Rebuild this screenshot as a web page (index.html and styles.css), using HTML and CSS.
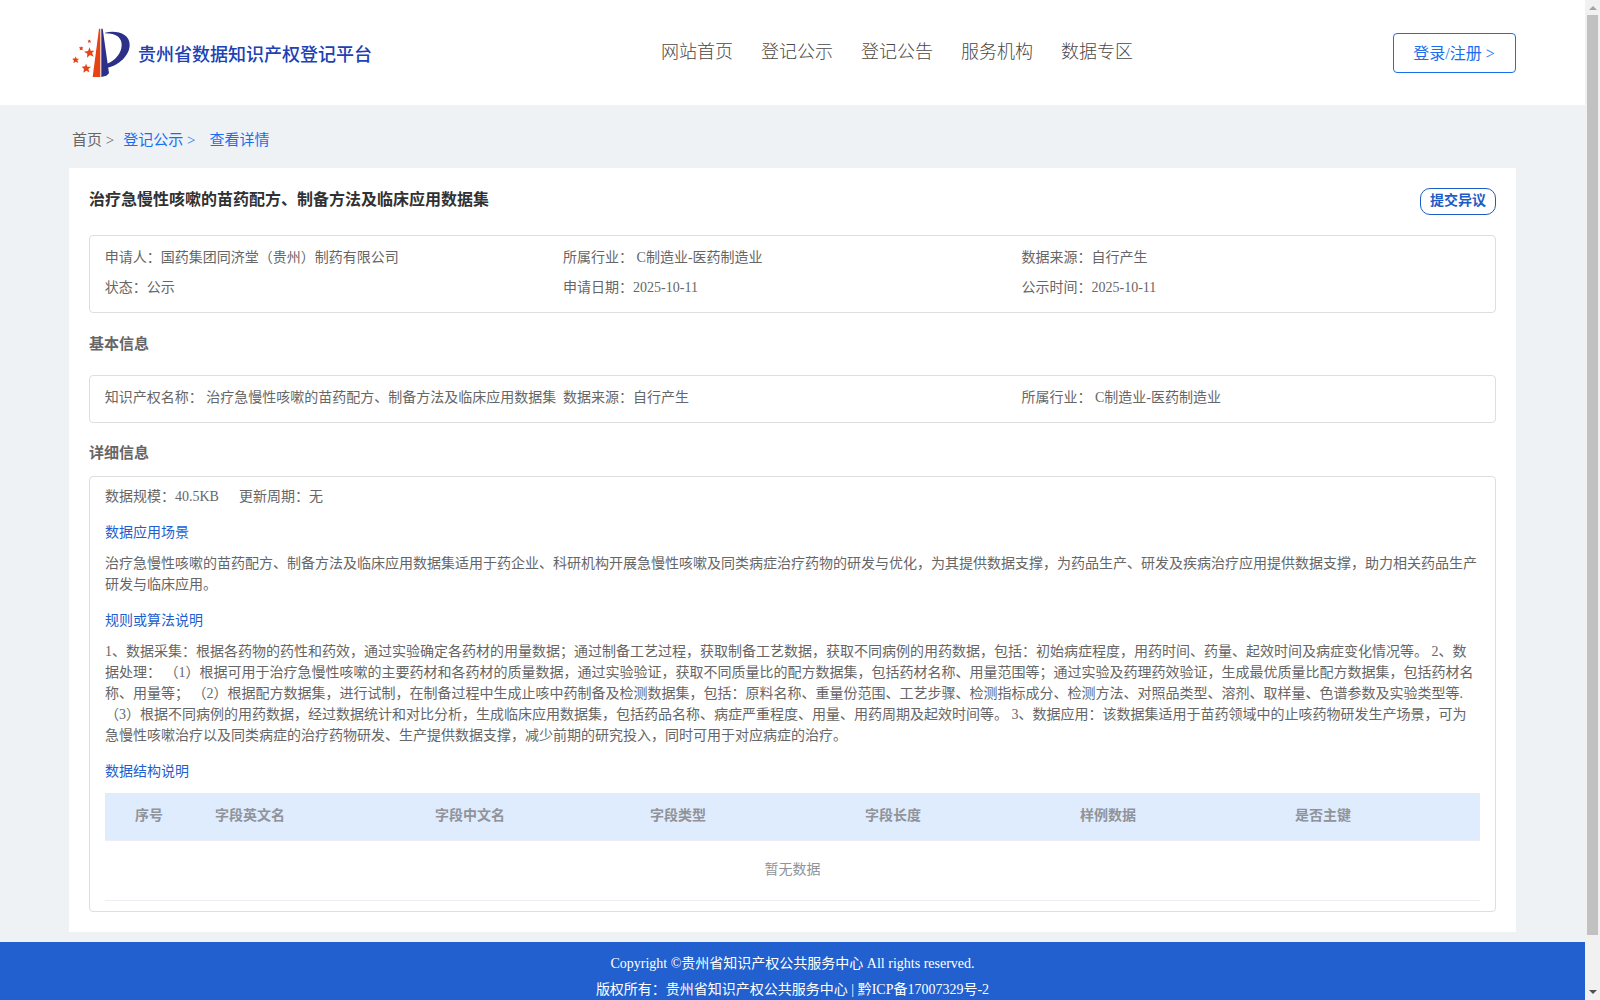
FILE: index.html
```html
<!DOCTYPE html>
<html lang="zh-CN">
<head>
    <meta charset="UTF-8">
    <meta name="viewport" content="width=device-width, initial-scale=1.0">
    <title>贵州省数据知识产权登记平台</title>
    <link rel="stylesheet" href="styles.css">
</head>
<body>

    <div class="page">
        <header class="header">
            <div class="brand">
                <svg class="logo" viewBox="36 24 180 150" width="60" height="50">
                    <path fill="#e64414" d="M117 26h4v145H98z"/>
                    <path fill="#2c3088" d="M124 26h4l19 134-8 7-15 4z"/>
                    <path fill="#2c3088" d="M135 38C172 30 209 42 209 74c0 32-32 62-67 69l-1-12c24-8 44-32 44-56 0-22-16-35-50-35z"/>
                    <g fill="#e64414">
                        <path d="M89 82l3 10 11 0-7 7 5 11-11-5-9 8 1-12-10-6 12-2z"/>
                        <path d="M47 109l3 7 8 0-6 5 3 8-8-4-7 5 2-8-5-6 8-1z"/>
                        <path d="M78 131l4 9 11 0-8 7 3 10-9-5-9 6 2-11-7-7 10-1z"/>
                        <path d="M63 78l2 4 5 0-3 4 2 5-5-2-5 2 1-5-3-4 5 0z"/>
                        <path d="M89 58l1 4 4 0-3 3 1 4-4-2-3 2 0-4-2-3 4-1z"/>
                    </g>
                </svg>
                <span class="brand-name">贵州省数据知识产权登记平台</span>
            </div>
            <nav class="nav">
                <a>网站首页</a>
                <a>登记公示</a>
                <a>登记公告</a>
                <a>服务机构</a>
                <a>数据专区</a>
            </nav>
            <button class="login-btn">登录/注册 &gt;</button>
        </header>

        <div class="breadcrumb">
            <span>首页 &gt;</span>
            <a class="crumb-list">登记公示 &gt;</a>
            <a class="crumb-detail">查看详情</a>
        </div>

        <main class="card">
            <div class="card-head">
                <h1>治疗急慢性咳嗽的苗药配方、制备方法及临床应用数据集</h1>
                <button class="objection-btn">提交异议</button>
            </div>

            <div class="box info-grid">
                <div>申请人：国药集团同济堂（贵州）制药有限公司</div>
                <div>所属行业： C制造业-医药制造业</div>
                <div>数据来源：自行产生</div>
                <div>状态：公示</div>
                <div>申请日期：2025-10-11</div>
                <div>公示时间：2025-10-11</div>
            </div>

            <h2 class="basic-title">基本信息</h2>
            <div class="box info-grid basic">
                <div>知识产权名称： 治疗急慢性咳嗽的苗药配方、制备方法及临床应用数据集</div>
                <div>数据来源：自行产生</div>
                <div>所属行业： C制造业-医药制造业</div>
            </div>

            <h2 class="detail-title">详细信息</h2>
            <div class="box detail">
                <div class="scale">
                    <span>数据规模：40.5KB</span>
                    <span>更新周期：无</span>
                </div>
                <h3>数据应用场景</h3>
                <p>治疗急慢性咳嗽的苗药配方、制备方法及临床应用数据集适用于药企业、科研机构开展急慢性咳嗽及同类病症治疗药物的研发与优化，为其提供数据支撑，为药品生产、研发及疾病治疗应用提供数据支撑，助力相关药品生产<br>研发与临床应用。</p>
                <h3>规则或算法说明</h3>
                <p>1、数据采集：根据各药物的药性和药效，通过实验确定各药材的用量数据；通过制备工艺过程，获取制备工艺数据，获取不同病例的用药数据，包括：初始病症程度，用药时间、药量、起效时间及病症变化情况等。 2、数<br>据处理： （1）根据可用于治疗急慢性咳嗽的主要药材和各药材的质量数据，通过实验验证，获取不同质量比的配方数据集，包括药材名称、用量范围等；通过实验及药理药效验证，生成最优质量比配方数据集，包括药材名<br>称、用量等； （2）根据配方数据集，进行试制，在制备过程中生成止咳中药制备及检测数据集，包括：原料名称、重量份范围、工艺步骤、检测指标成分、检测方法、对照品类型、溶剂、取样量、色谱参数及实验类型等.<br>（3）根据不同病例的用药数据，经过数据统计和对比分析，生成临床应用数据集，包括药品名称、病症严重程度、用量、用药周期及起效时间等。 3、数据应用：该数据集适用于苗药领域中的止咳药物研发生产场景，可为<br>急慢性咳嗽治疗以及同类病症的治疗药物研发、生产提供数据支撑，减少前期的研究投入，同时可用于对应病症的治疗。</p>
                <h3>数据结构说明</h3>
                <table>
                    <thead>
                        <tr>
                            <th class="col-index">序号</th>
                            <th class="col-en">字段英文名</th>
                            <th>字段中文名</th>
                            <th>字段类型</th>
                            <th>字段长度</th>
                            <th>样例数据</th>
                            <th class="col-key">是否主键</th>
                        </tr>
                    </thead>
                    <tbody>
                        <tr>
                            <td colspan="7">暂无数据</td>
                        </tr>
                    </tbody>
                </table>
            </div>
        </main>

        <footer class="footer">
            <div>Copyright ©贵州省知识产权公共服务中心 All rights reserved.</div>
            <div>版权所有：贵州省知识产权公共服务中心 | 黔ICP备17007329号-2</div>
        </footer>
    </div>

    <div class="scrollbar">
        <div class="arrow-up"></div>
        <div class="thumb"></div>
        <div class="arrow-down"></div>
    </div>

</body>
</html>
```

FILE: styles.css
```css
* {
    box-sizing: border-box;
}
body {
    margin: 0;
    display: flex;
    height: 1000px;
    overflow: hidden;
    font-family: "Liberation Serif", "Noto Sans CJK SC", serif;
    font-size: 14px;
    color: #666;
    background: #eef2f5;
    text-spacing-trim: space-all;
    white-space: nowrap;
}
h1, h2, h3, p {
    margin: 0;
}
button {
    font-family: inherit;
    background: #fff;
    padding: 0;
}
.page {
    width: 1585px;
    height: 1000px;
    overflow: hidden;
}

/* header */
.header {
    display: flex;
    align-items: flex-start;
    height: 105px;
    padding: 28px 69px 0 72px;
    background: #fff;
}
.brand {
    display: flex;
    width: 589px;
}
.brand-name {
    margin-left: 6px;
    font-size: 18px;
    line-height: 54px;
    font-weight: 500;
    color: #2040b4;
}
.nav {
    display: flex;
    gap: 28px;
    flex: 1;
    font-size: 18px;
    font-weight: 300;
    line-height: 48px;
    color: #484848;
}
.login-btn {
    width: 123px;
    height: 40px;
    margin-top: 5px;
    padding: 0 1px 3px 0;
    border: 1px solid #1a6ff0;
    border-radius: 4px;
    font-size: 16px;
    color: #1a6ff0;
}

/* breadcrumb */
.breadcrumb {
    display: flex;
    height: 63px;
    padding-left: 72px;
    font-size: 15px;
    line-height: 70px;
    color: #666;
}
.breadcrumb a {
    color: #1a6ff0;
}
.crumb-list {
    margin-left: 9px;
}
.crumb-detail {
    margin-left: 14px;
}

/* content */
.card {
    width: 1447px;
    height: 764px;
    margin-left: 69px;
    padding: 20px;
    background: #fff;
}
.card-head {
    display: flex;
    justify-content: space-between;
    height: 47px;
}
h1 {
    font-size: 16px;
    line-height: 23px;
    color: #303133;
}
.objection-btn {
    width: 76px;
    height: 27px;
    padding-bottom: 1px;
    border: 1px solid #1d5cc4;
    border-radius: 10px;
    font-size: 14px;
    font-weight: bold;
    line-height: 24px;
    color: #1d5cc4;
}
.box {
    border: 1px solid #dcdee0;
    border-radius: 4px;
    padding: 7px 15px;
}
.info-grid {
    display: grid;
    grid-template-columns: repeat(3, 458.4px);
    grid-auto-rows: 30px;
    height: 78px;
    padding-left: 14.7px;
    line-height: 30px;
}
.basic {
    height: 48px;
}
h2 {
    font-size: 15px;
}
.basic-title {
    height: 62px;
    line-height: 62px;
}
.detail-title {
    height: 53px;
    line-height: 61px;
}
.detail {
    height: 436px;
    padding-top: 9px;
}
.scale {
    display: flex;
    gap: 20px;
    line-height: 21px;
}
h3 {
    font-size: 14px;
    font-weight: normal;
    line-height: 21px;
    margin: 15px 0 10px;
    color: #1d5fce;
}
p {
    line-height: 21px;
}
table {
    width: 1375px;
    margin-top: 11px;
    table-layout: fixed;
    border-collapse: separate;
    border-spacing: 0;
    color: #909399;
}
th {
    width: 215px;
    height: 48px;
    padding: 0 0 5px 10px;
    text-align: left;
    background: #dfecfe;
    border-bottom: 1px solid #ebeef5;
}
.col-index {
    width: 100px;
    padding-left: 30px;
}
.col-en {
    width: 220px;
}
.col-key {
    width: 195px;
}
td {
    height: 60px;
    padding: 0 0 5px;
    text-align: center;
    border-bottom: 1px solid #ebeef5;
}

/* footer */
.footer {
    height: 58px;
    margin-top: 10px;
    padding-top: 9px;
    background: #2160ce;
    color: #fff;
    line-height: 26px;
    text-align: center;
}

/* scrollbar */
.scrollbar {
    display: flex;
    flex-direction: column;
    align-items: center;
    width: 15px;
    height: 1000px;
    padding: 6px 0;
    background: #f1f1f1;
}
.arrow-up {
    border: 4px solid transparent;
    border-top: 0;
    border-bottom-color: #a3a3a3;
}
.thumb {
    width: 11px;
    height: 920px;
    margin-top: 5px;
    background: #c1c1c1;
}
.arrow-down {
    margin-top: auto;
    border: 4px solid transparent;
    border-bottom: 0;
    border-top-color: #505050;
}
```
